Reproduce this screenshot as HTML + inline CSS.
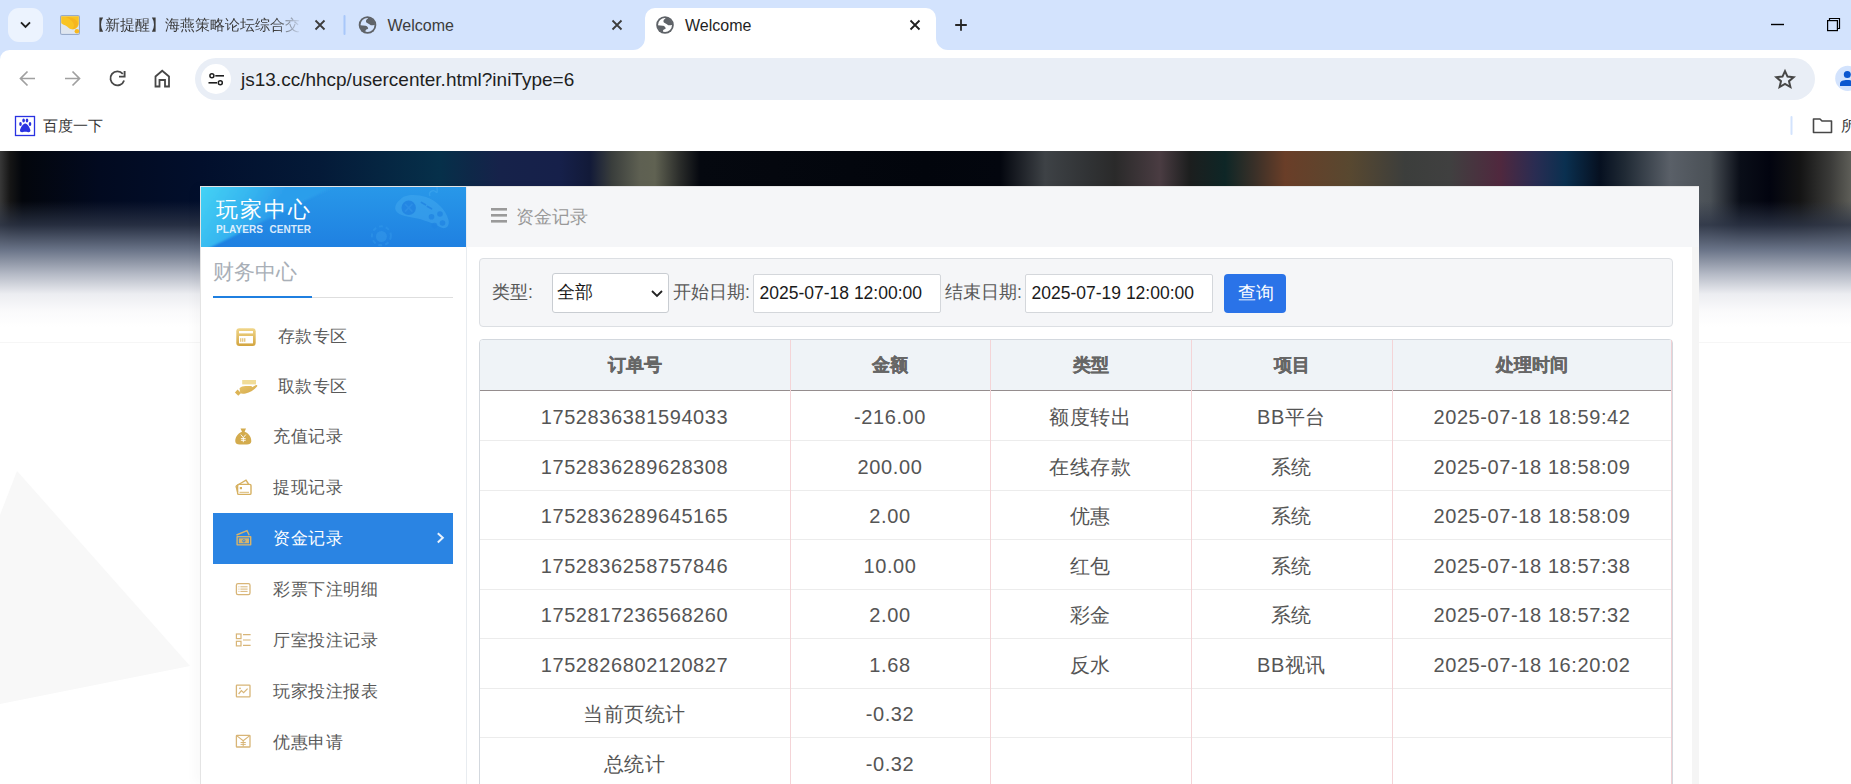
<!DOCTYPE html>
<html><head><meta charset="utf-8">
<style>
*{margin:0;padding:0;box-sizing:border-box}
html,body{width:1851px;height:784px;overflow:hidden;background:#fff;font-family:"Liberation Sans",sans-serif;position:relative}
.a{position:absolute}
/* chrome */
#tabstrip{left:0;top:0;width:1851px;height:62px;background:#d3e3fd}
#toolbar{left:0;top:50px;width:1851px;height:55px;background:#fff;border-top-left-radius:9.5px}
#bookmarks{left:0;top:105px;width:1851px;height:46px;background:#fff}
.tabtitle{font-size:16px;color:#1f1f1f;white-space:nowrap}
/* page */
#page{left:0;top:151px;width:1851px;height:633px;background:#fff;overflow:hidden}
.lbl{font-size:17.5px;color:#595959;line-height:24px;white-space:nowrap}
.th{top:340px;height:50px;line-height:50px;text-align:center;font-size:18px;font-weight:bold;color:#666;-webkit-text-stroke:0.35px #666}
.td{height:49px;line-height:52px;text-align:center;font-size:20px;color:#555;letter-spacing:0.6px;white-space:nowrap}
.mi{font-size:17.2px;letter-spacing:0.5px;line-height:24px;white-space:nowrap}
</style></head><body>
<div id="tabstrip" class="a"></div>
<div id="toolbar" class="a"></div>
<div id="bookmarks" class="a"></div>
<svg class="a" style="left:0;top:0" width="1851" height="151" viewBox="0 0 1851 151">
  <defs><clipPath id="gclip"><circle r="7.6"/></clipPath></defs>
  <!-- tab search button -->
  <rect x="8" y="8" width="35" height="34" rx="11" fill="#ecf3fe"/>
  <path d="M21 22.3 L25.5 26.8 L30 22.3" fill="none" stroke="#1f1f1f" stroke-width="1.9"/>
  <!-- tab1 favicon -->
  <rect x="60.6" y="15.6" width="18.8" height="18.8" rx="1.5" fill="#edf2f9" stroke="#98abca" stroke-width="1.2"/>
  <rect x="62" y="17" width="16" height="16" fill="#dfe6ef"/>
  <path d="M61.2 16.2 H78.8 V23.5 C78.5 27.5 75.5 29.5 72 29.3 C68.5 29 67.5 26.2 65 25.3 C63 24.6 61.2 23.8 61.2 22.5 Z" fill="#f9c423"/>
  <path d="M66 17 C72 17 77 19 78 24 C77 28 74 29.3 72 29.2 C75 27 76 22 66 17Z" fill="#f3ac1d" opacity="0.6"/>
  <circle cx="76.9" cy="31.3" r="2.3" fill="#f7b81e"/>
<!-- tab1 close -->
  <path d="M315.5 20.5 L324.5 29.5 M324.5 20.5 L315.5 29.5" stroke="#3c3c3c" stroke-width="1.8"/>
  <!-- separator -->
  <rect x="343.5" y="15" width="2" height="20" rx="1" fill="#a8c7fa"/>
  <!-- tab2 globe -->
  <g transform="translate(367.5,25)"><circle r="8.8" fill="#5f6368"/><circle r="7" fill="#d3e3fd"/><g clip-path="url(#gclip)"><path d="M1.3,-7.5 L-1.3,-5 C-1.8,-3.5 -1.5,-2.3 -0.3,-2 C1,-1.5 2,-0.5 3.3,0.3 L5.6,0.3 L7.5,-0.3 L7.5,-7.5 Z M-7.5,0.3 L-2,0.7 C-0.5,1 0.5,2 0.7,3.3 C0.5,4 -0.2,4.2 -0.7,4.3 C-1.8,4.8 -2.2,5.6 -2,7 L-2,7.5 L-7.5,7.5 Z" fill="#5f6368"/></g></g>
  <path d="M612.5 20.5 L621.5 29.5 M621.5 20.5 L612.5 29.5" stroke="#3c3c3c" stroke-width="1.8"/>
  <!-- active tab -->
  <path d="M633 50 A12 12 0 0 0 645 38 V18 A10 10 0 0 1 655 8 H926 A10 10 0 0 1 936 18 V38 A12 12 0 0 0 948 50 Z" fill="#fff"/>
  <g transform="translate(665,25)"><circle r="8.8" fill="#5f6368"/><circle r="7" fill="#fff"/><g clip-path="url(#gclip)"><path d="M1.3,-7.5 L-1.3,-5 C-1.8,-3.5 -1.5,-2.3 -0.3,-2 C1,-1.5 2,-0.5 3.3,0.3 L5.6,0.3 L7.5,-0.3 L7.5,-7.5 Z M-7.5,0.3 L-2,0.7 C-0.5,1 0.5,2 0.7,3.3 C0.5,4 -0.2,4.2 -0.7,4.3 C-1.8,4.8 -2.2,5.6 -2,7 L-2,7.5 L-7.5,7.5 Z" fill="#5f6368"/></g></g>
  <path d="M910.5 20.5 L919.5 29.5 M919.5 20.5 L910.5 29.5" stroke="#1f1f1f" stroke-width="1.8"/>
  <!-- plus -->
  <path d="M961 19.2 V30.8 M955.2 25 H966.8" stroke="#262626" stroke-width="1.8"/>
  <!-- window controls -->
  <rect x="1771" y="23.8" width="13" height="1.4" fill="#000"/>
  <path d="M1829.5 20.5 V18.5 H1839.5 V28.5 H1837.5" fill="none" stroke="#000" stroke-width="1.2"/>
  <rect x="1827.6" y="20.6" width="9.8" height="10" fill="none" stroke="#000" stroke-width="1.2"/>
  <!-- toolbar icons -->
  <path d="M35 78.5 H21 M27.5 71.5 L20.5 78.5 L27.5 85.5" fill="none" stroke="#a0a0a0" stroke-width="1.7"/>
  <path d="M65 78.5 H79 M72.5 71.5 L79.5 78.5 L72.5 85.5" fill="none" stroke="#a0a0a0" stroke-width="1.7"/>
  <path d="M122.8 73.8 A7 7 0 1 0 124.1 80.5" fill="none" stroke="#474747" stroke-width="1.8"/>
  <path d="M124.6 71 V76.6 H119" fill="none" stroke="#474747" stroke-width="1.9"/>
  <path d="M155.5 86.5 V76.5 L162.2 70.8 L169 76.5 V86.5 H165 V80 H159.5 V86.5 Z" fill="none" stroke="#474747" stroke-width="1.8" stroke-linejoin="miter"/>
  <!-- omnibox -->
  <rect x="195" y="58" width="1620" height="42" rx="21" fill="#e9eef6"/>
  <circle cx="216" cy="79" r="15" fill="#fff"/>
  <circle cx="211.9" cy="75.8" r="2" fill="none" stroke="#1f1f1f" stroke-width="1.5"/>
  <path d="M215.3 75.8 H224" stroke="#1f1f1f" stroke-width="1.6"/>
  <path d="M208.5 82.8 H217" stroke="#1f1f1f" stroke-width="1.6"/>
  <circle cx="220.3" cy="82.8" r="2" fill="none" stroke="#1f1f1f" stroke-width="1.5"/>
  <!-- star -->
  <path d="M1785 71.2 L1787.5 76.6 L1793.6 77.2 L1789 81.2 L1790.4 87.1 L1785 84 L1779.6 87.1 L1781 81.2 L1776.4 77.2 L1782.5 76.6 Z" fill="none" stroke="#474747" stroke-width="2" stroke-linejoin="miter"/>
  <!-- profile -->
  <circle cx="1847.8" cy="78.4" r="12.6" fill="#d3e3fd"/>
  <circle cx="1847.3" cy="74.6" r="3.5" fill="#0b57d0"/>
  <path d="M1840 86 V83.5 C1840 81 1843.5 80 1847.3 80 C1851 80 1854.6 81 1854.6 83.5 V86 Z" fill="#0b57d0"/>
  <!-- bookmarks -->
  <rect x="15.5" y="116.5" width="19" height="19" fill="#fff" stroke="#2932e1" stroke-width="1.3"/>
  <g fill="#2932e1">
    <ellipse cx="20.5" cy="124" rx="1.3" ry="1.9"/>
    <ellipse cx="23.6" cy="120.5" rx="1.3" ry="1.9"/>
    <ellipse cx="27" cy="120.5" rx="1.3" ry="1.9"/>
    <ellipse cx="30" cy="124" rx="1.3" ry="1.9"/>
    <path d="M25.2 123.5 C23 123.5 20.5 128 20 130 C19.8 132 21.5 132.5 23 132 C24.5 131.6 26 131.6 27.5 132 C29 132.5 30.6 132 30.4 130 C30 128 27.5 123.5 25.2 123.5Z"/>
  </g>
  <rect x="1790.5" y="116" width="2" height="19" rx="1" fill="#d3e3fd"/>
  <path d="M1813.5 119 H1820 L1822 121 H1831.5 V132.5 H1813.5 Z" fill="none" stroke="#474747" stroke-width="1.6" stroke-linejoin="round"/>
</svg>
<div class="a tabtitle" style="left:89.5px;top:16px;font-size:15px;color:#3c3c3c;width:212px;overflow:hidden;-webkit-mask-image:linear-gradient(90deg,#000 185px,transparent 212px)">【新提醒】海燕策略论坛综合交</div>
<div class="a tabtitle" style="left:387.5px;top:17px;color:#3c3c3c">Welcome</div>
<div class="a tabtitle" style="left:685px;top:17px;color:#1f1f1f">Welcome</div>
<div class="a" style="left:241px;top:68.5px;font-size:19px;color:#1f1f1f;white-space:nowrap">js13.cc/hhcp/usercenter.html?iniType=6</div>
<div class="a" style="left:43px;top:117px;font-size:15px;color:#333;white-space:nowrap">百度一下</div>
<div class="a" style="left:1841px;top:117px;font-size:15px;color:#333;white-space:nowrap">所</div>
<div id="page" class="a">
  <div class="a" id="banner" style="left:0;top:0;width:1851px;height:191px;background:linear-gradient(90deg,#383838 0px,#161616 10px,#03060c 22px,#020a20 100px,#020f2c 200px,#041a38 320px,#06304a 440px,#0e2848 470px,#16224a 500px,#16204a 560px,#121a38 590px,#3a3e3c 612px,#5e6052 640px,#606252 655px,#2a2c2a 680px,#05080f 700px,#02050c 925px,#03060e 1000px,#3e4246 1045px,#303234 1090px,#2a2a2a 1115px,#4a3c42 1160px,#1c1e1e 1190px,#0e2626 1225px,#3a3028 1255px,#6a3e28 1285px,#584830 1350px,#3c3e3c 1405px,#404040 1450px,#50283e 1500px,#2a2c52 1535px,#0a3050 1565px,#061020 1600px,#202a35 1625px,#5a6068 1670px,#4a5056 1710px,#0a0e18 1740px,#02040f 1770px,#141414 1800px,#3a3a38 1830px,#5e5e58 1851px)"></div>
  <div class="a" id="bannerfade" style="left:0;top:0;width:1851px;height:191px;background:linear-gradient(180deg,rgba(40,50,72,0) 0px,rgba(40,50,72,0) 50px,rgba(46,54,72,.82) 74px,rgba(106,116,136,1) 99px,rgba(180,185,197,1) 123px,rgba(236,237,241,1) 143px,rgba(250,250,251,1) 160px,#fff 176px,#fff 191px)"></div>
  <div class="a" style="left:0;top:191px;width:1851px;height:1px;background:#f6f6f6"></div>
  <svg class="a" style="left:0;top:0" width="200" height="633"><polygon points="17,320 190,515 0,553 0,364" fill="#f8f8f8"/></svg>
</div>
<!-- container -->
<div class="a" style="left:200px;top:186px;width:1499px;height:598px;background:#f5f5f5;border:1px solid #e4e4e4;border-bottom:none;border-right:none;box-shadow:-6px 0 10px rgba(0,0,0,0.025)"></div>
<!-- sidebar -->
<div class="a" id="side" style="left:201px;top:187px;width:266px;height:597px;background:#fff;border-right:1px solid #e8ecf0"></div>
<svg class="a" id="sidehead" style="left:201px;top:187px" width="265" height="60" viewBox="201 187 265 60">
<defs>
<linearGradient id="hbase" x1="0" y1="0" x2="0" y2="1"><stop offset="0" stop-color="#2898e9"/><stop offset="1" stop-color="#1f80e1"/></linearGradient>
<linearGradient id="hsheen" gradientUnits="userSpaceOnUse" x1="201" y1="187" x2="262" y2="226"><stop offset="0" stop-color="#44d3f5"/><stop offset="0.6" stop-color="#36b6f0"/><stop offset="1" stop-color="#2c9eeb"/></linearGradient><filter id="bl1"><feGaussianBlur stdDeviation="1.2"/></filter><filter id="bl2"><feGaussianBlur stdDeviation="0.5"/></filter>
</defs>
<rect x="201" y="187" width="265" height="60" fill="url(#hbase)"/>
<polygon points="195,181 345,181 201,252 195,252" fill="url(#hsheen)" filter="url(#bl1)"/>
<g opacity="0.4" filter="url(#bl2)">
<path d="M400 200 C404 194 416 194 426 197 C436 200 446 210 448.5 220 C450 227 445 230 440 227 C434 223 428 222 420 219 C410 217 398 216 395.5 210 C394.5 206 397 202 400 200Z" fill="#4cb0f2"/>
<path d="M430 196 C428 192 433 189 436 192 C438 194 437 189 437 186" fill="none" stroke="#4cb0f2" stroke-width="1.3"/>
</g>
<circle cx="408.7" cy="207.8" r="7.2" fill="#2182e2" opacity="0.85"/>
<path d="M405 204 L412.4 211.6 M412.4 204 L405 211.6" stroke="#3597ea" stroke-width="1.6" opacity="0.5"/>
<path d="M421.5 202.5 L425.5 204.8 M427.5 206.5 L431.5 208.8" stroke="#2184e2" stroke-width="1.8" stroke-linecap="round" opacity="0.8"/>
<circle cx="431.5" cy="216.8" r="2.8" fill="#2184e2" opacity="0.8"/>
<circle cx="440" cy="214" r="2.8" fill="#2184e2" opacity="0.8"/>
<circle cx="434.5" cy="225.5" r="2.8" fill="#2184e2" opacity="0.8"/>
<circle cx="442.5" cy="223" r="2.8" fill="#2184e2" opacity="0.8"/>
<circle cx="381.4" cy="235.8" r="9.5" fill="none" stroke="#3aa0ee" stroke-width="2" stroke-dasharray="4 3" opacity="0.35"/>
<circle cx="381.4" cy="236.5" r="5.5" fill="#3a9eec" opacity="0.45"/>
</svg>
<div class="a" style="left:215.5px;top:197px;font-size:22px;letter-spacing:2.3px;color:#fff;white-space:nowrap;line-height:26px">玩家中心</div>
<div class="a" style="left:216px;top:223.5px;font-size:10px;font-weight:bold;color:rgba(240,248,255,0.9);white-space:nowrap;letter-spacing:0.1px;word-spacing:3.5px;line-height:12px">PLAYERS CENTER</div>
<!-- main header -->
<div class="a" style="left:467px;top:187px;width:1232px;height:60px;background:#f5f6f8"></div>
<div class="a" style="left:467px;top:247px;width:1225px;height:537px;background:#fff"></div>
<svg class="a" style="left:491px;top:207px" width="17" height="17"><rect x="0" y="1" width="16" height="2.6" fill="#9a9a9a"/><rect x="0" y="7" width="16" height="2.6" fill="#9a9a9a"/><rect x="0" y="13" width="16" height="2.6" fill="#9a9a9a"/></svg>
<div class="a" style="left:516px;top:205px;font-size:17.5px;color:#999;white-space:nowrap;line-height:24px">资金记录</div>
<!-- sidebar title -->
<div class="a" style="left:213px;top:260px;font-size:21px;color:#a9afb7;white-space:nowrap;line-height:24px">财务中心</div>
<div class="a" style="left:213px;top:297px;width:240px;height:1px;background:#dedede"></div>
<div class="a" style="left:213px;top:295.5px;width:99px;height:2.5px;background:#1f7fe0"></div>
<!-- menu -->
<div class="a" style="left:213px;top:513px;width:240px;height:51px;background:#2a84e3"></div>
<!-- filter -->
<div class="a" style="left:479px;top:258px;width:1194px;height:69px;background:#f5f6f8;border:1px solid #dcdfe3;border-radius:4px"></div>
<div class="a lbl" style="left:492px;top:280px">类型:</div>
<div class="a" style="left:552px;top:273px;width:117px;height:40px;background:#fff;border:1px solid #c9cdd2;border-radius:3px"></div>
<div class="a" style="left:557px;top:280px;font-size:17.5px;color:#1a1a1a;line-height:24px">全部</div>
<svg class="a" style="left:650px;top:289px" width="14" height="10"><path d="M2 2 L7 7 L12 2" fill="none" stroke="#222" stroke-width="1.8"/></svg>
<div class="a lbl" style="left:673px;top:280px">开始日期:</div>
<div class="a" style="left:753px;top:274px;width:188px;height:39px;background:#fff;border:1px solid #d4d7db;border-radius:2px"></div>
<div class="a" style="left:759.5px;top:283px;font-size:17.5px;color:#1a1a1a;line-height:20px;white-space:nowrap">2025-07-18 12:00:00</div>
<div class="a lbl" style="left:945px;top:280px">结束日期:</div>
<div class="a" style="left:1025px;top:274px;width:188px;height:39px;background:#fff;border:1px solid #d4d7db;border-radius:2px"></div>
<div class="a" style="left:1031.5px;top:283px;font-size:17.5px;color:#1a1a1a;line-height:20px;white-space:nowrap">2025-07-19 12:00:00</div>
<div class="a" style="left:1224px;top:274px;width:62px;height:39px;background:#2a73e8;border-radius:4px"></div>
<div class="a" style="left:1238px;top:281px;font-size:17.5px;color:#fff;line-height:24px">查询</div>

<!-- table -->
<div class="a" style="left:479px;top:339px;width:1194px;height:460px;background:#fff;border:1px solid #d3d8de;border-radius:4px 4px 0 0"></div>
<div class="a" style="left:480px;top:340px;width:1192px;height:50px;background:#eff3f7;border-radius:3px 3px 0 0"></div>
<div class="a" style="left:480px;top:390px;width:1192px;height:1px;background:#958d8e"></div>
<div class="a" style="left:480px;top:440.3px;width:1192px;height:1px;background:#ececec"></div>
<div class="a" style="left:480px;top:489.8px;width:1192px;height:1px;background:#ececec"></div>
<div class="a" style="left:480px;top:539.3px;width:1192px;height:1px;background:#ececec"></div>
<div class="a" style="left:480px;top:588.8px;width:1192px;height:1px;background:#ececec"></div>
<div class="a" style="left:480px;top:638.3px;width:1192px;height:1px;background:#ececec"></div>
<div class="a" style="left:480px;top:687.8px;width:1192px;height:1px;background:#ececec"></div>
<div class="a" style="left:480px;top:737.3px;width:1192px;height:1px;background:#ececec"></div>
<div class="a" style="left:480px;top:786.8px;width:1192px;height:1px;background:#ececec"></div>
<div class="a" style="left:790px;top:340px;width:1px;height:444px;background:#f4d4d7"></div>
<div class="a" style="left:990px;top:340px;width:1px;height:444px;background:#f4d4d7"></div>
<div class="a" style="left:1191px;top:340px;width:1px;height:444px;background:#f4d4d7"></div>
<div class="a" style="left:1392px;top:340px;width:1px;height:444px;background:#f4d4d7"></div>
<div class="a" style="left:1671px;top:340px;width:1px;height:444px;background:#f0d0d4"></div>
<div class="a th" style="left:479px;width:311px">订单号</div>
<div class="a th" style="left:790px;width:200px">金额</div>
<div class="a th" style="left:990px;width:201px">类型</div>
<div class="a th" style="left:1191px;width:201px">项目</div>
<div class="a th" style="left:1392px;width:280px">处理时间</div>
<div class="a td" style="left:479px;top:391.0px;width:311px">1752836381594033</div>
<div class="a td" style="left:790px;top:391.0px;width:200px">-216.00</div>
<div class="a td" style="left:990px;top:391.0px;width:201px">额度转出</div>
<div class="a td" style="left:1191px;top:391.0px;width:201px">BB平台</div>
<div class="a td" style="left:1392px;top:391.0px;width:280px">2025-07-18 18:59:42</div>
<div class="a td" style="left:479px;top:440.5px;width:311px">1752836289628308</div>
<div class="a td" style="left:790px;top:440.5px;width:200px">200.00</div>
<div class="a td" style="left:990px;top:440.5px;width:201px">在线存款</div>
<div class="a td" style="left:1191px;top:440.5px;width:201px">系统</div>
<div class="a td" style="left:1392px;top:440.5px;width:280px">2025-07-18 18:58:09</div>
<div class="a td" style="left:479px;top:490.0px;width:311px">1752836289645165</div>
<div class="a td" style="left:790px;top:490.0px;width:200px">2.00</div>
<div class="a td" style="left:990px;top:490.0px;width:201px">优惠</div>
<div class="a td" style="left:1191px;top:490.0px;width:201px">系统</div>
<div class="a td" style="left:1392px;top:490.0px;width:280px">2025-07-18 18:58:09</div>
<div class="a td" style="left:479px;top:539.5px;width:311px">1752836258757846</div>
<div class="a td" style="left:790px;top:539.5px;width:200px">10.00</div>
<div class="a td" style="left:990px;top:539.5px;width:201px">红包</div>
<div class="a td" style="left:1191px;top:539.5px;width:201px">系统</div>
<div class="a td" style="left:1392px;top:539.5px;width:280px">2025-07-18 18:57:38</div>
<div class="a td" style="left:479px;top:589.0px;width:311px">1752817236568260</div>
<div class="a td" style="left:790px;top:589.0px;width:200px">2.00</div>
<div class="a td" style="left:990px;top:589.0px;width:201px">彩金</div>
<div class="a td" style="left:1191px;top:589.0px;width:201px">系统</div>
<div class="a td" style="left:1392px;top:589.0px;width:280px">2025-07-18 18:57:32</div>
<div class="a td" style="left:479px;top:638.5px;width:311px">1752826802120827</div>
<div class="a td" style="left:790px;top:638.5px;width:200px">1.68</div>
<div class="a td" style="left:990px;top:638.5px;width:201px">反水</div>
<div class="a td" style="left:1191px;top:638.5px;width:201px">BB视讯</div>
<div class="a td" style="left:1392px;top:638.5px;width:280px">2025-07-18 16:20:02</div>
<div class="a td" style="left:479px;top:688.0px;width:311px">当前页统计</div>
<div class="a td" style="left:790px;top:688.0px;width:200px">-0.32</div>
<div class="a td" style="left:479px;top:737.5px;width:311px">总统计</div>
<div class="a td" style="left:790px;top:737.5px;width:200px">-0.32</div>
<div class="a mi" style="left:277.5px;top:323.7px;color:#595959">存款专区</div>
<div class="a mi" style="left:277.5px;top:374.0px;color:#595959">取款专区</div>
<div class="a mi" style="left:273px;top:424.2px;color:#595959">充值记录</div>
<div class="a mi" style="left:273px;top:474.7px;color:#595959">提现记录</div>
<div class="a mi" style="left:273px;top:525.7px;color:#fff">资金记录</div>
<div class="a mi" style="left:273px;top:576.7px;color:#595959">彩票下注明细</div>
<div class="a mi" style="left:273px;top:627.7px;color:#595959">厅室投注记录</div>
<div class="a mi" style="left:273px;top:678.8px;color:#595959">玩家投注报表</div>
<div class="a mi" style="left:273px;top:730.1px;color:#595959">优惠申请</div>
<!-- menu icons -->
<svg class="a" style="left:0;top:0" width="470" height="784" viewBox="0 0 470 784">
<defs>
<linearGradient id="gold1" x1="0" y1="0" x2="0" y2="1"><stop offset="0" stop-color="#f0d68a"/><stop offset="1" stop-color="#d2a43e"/></linearGradient>
<linearGradient id="gold2" x1="0" y1="0" x2="1" y2="1"><stop offset="0" stop-color="#e9c56a"/><stop offset="1" stop-color="#d3a84a"/></linearGradient>
</defs>
<!-- card -->
<rect x="236.3" y="328.3" width="19.4" height="17.7" rx="3" fill="url(#gold1)"/>
<rect x="239" y="331" width="14" height="2.4" fill="#fff"/>
<rect x="239" y="336" width="14" height="7.4" fill="#fff"/>
<rect x="240.3" y="338.2" width="1" height="3.6" fill="#dcb354"/>
<rect x="242.3" y="338.2" width="1" height="3.6" fill="#dcb354"/>
<rect x="244.3" y="338.2" width="1" height="3.6" fill="#dcb354"/>
<!-- hand -->
<rect x="242.2" y="380" width="13.8" height="4.4" fill="#f1dc97"/>
<path d="M239.5 388.2 C241 386.6 243 385.9 245.5 385.9 L250.5 386 C252.3 386.1 252.6 387.6 251 387.9 L247.3 388.3 C249.5 388.6 252 387.6 255.6 385.3 C256.8 384.6 257.9 385.6 257 386.6 C254.5 389.5 250.5 392.5 245.5 393.4 C243.5 393.8 241.5 393.7 240.3 393.3 Z" fill="url(#gold2)"/>
<polygon points="234.9,392.4 237.6,389.6 241,393 238.3,395.8" fill="#dcb456"/>
<!-- money bag -->
<path d="M240.5 428.6 L246 428.6 L244.6 431.8 C249.5 433.5 251.5 438 251.3 441.5 C251.1 443.6 249.5 444.4 247 444.4 L239.5 444.4 C237 444.4 235.4 443.6 235.3 441.5 C235.1 438 237.2 433.5 242 431.8 Z" fill="#d3ab4d"/>
<path d="M240.8 434.6 L243.3 437.6 L245.8 434.6 M243.3 437.6 V442.2 M240.9 438.6 H245.7 M240.9 440.3 H245.7" fill="none" stroke="#fff" stroke-width="0.9"/>
<!-- wallet -->
<path d="M236 486 L246 480.2 L248.5 484" fill="none" stroke="#d6b060" stroke-width="1.4"/>
<rect x="237.6" y="484.4" width="13.4" height="10" rx="1.2" fill="none" stroke="#d6b060" stroke-width="1.4"/>
<path d="M236 486 L237.6 492" fill="none" stroke="#d6b060" stroke-width="1.4"/>
<rect x="239.8" y="487" width="2.2" height="2.2" fill="#d6b060"/>
<path d="M239.5 492.3 H249" stroke="#d6b060" stroke-width="0.9"/>
<!-- cash (active) -->
<path d="M236.5 535 L247 530.6 L249.2 535.2" fill="none" stroke="#d8b46a" stroke-width="1.4"/>
<rect x="236.4" y="536" width="15" height="9.6" rx="0.8" fill="#d8b46a"/>
<rect x="237.8" y="537.4" width="12.2" height="6.8" fill="#2a84e3"/>
<rect x="238.8" y="538.3" width="10.2" height="5" fill="#d8b46a"/>
<circle cx="243.9" cy="540.8" r="1.6" fill="#2a84e3"/>
<circle cx="243.9" cy="540.8" r="0.8" fill="#d8b46a"/>
<!-- list card -->
<rect x="236.4" y="583.6" width="13.6" height="11" rx="1.6" fill="none" stroke="#d8b577" stroke-width="1.3"/>
<path d="M240.4 586.8 H247.6 M240.4 589.1 H247.6 M240.4 591.4 H247.6" stroke="#d8b577" stroke-width="1"/>
<path d="M238.5 586.8 h0.9 M238.5 589.1 h0.9 M238.5 591.4 h0.9" stroke="#d8b577" stroke-width="1"/>
<!-- list -->
<rect x="236.4" y="634" width="4.6" height="4.6" fill="none" stroke="#d8b577" stroke-width="1.2"/>
<rect x="236.4" y="641.3" width="4.6" height="4.6" fill="none" stroke="#d8b577" stroke-width="1.2"/>
<path d="M243 634.6 H250.6 M243 640 H250.6 M243 645.4 H250.6" stroke="#d8b577" stroke-width="1.2"/>
<!-- chart -->
<rect x="236.4" y="685.1" width="13.6" height="11.8" rx="0.6" fill="none" stroke="#d8b577" stroke-width="1.3"/>
<path d="M238.6 694 L241.4 690.6 L243.6 692.6 L247.6 688.6" fill="none" stroke="#d8b577" stroke-width="1.2"/>
<circle cx="240" cy="688.3" r="0.9" fill="#d8b577"/>
<!-- envelope yen -->
<rect x="236.4" y="735.4" width="13.6" height="11.6" rx="0.6" fill="none" stroke="#d8b577" stroke-width="1.3"/>
<path d="M236.6 735.6 L243.2 740.8 L249.8 735.6" fill="none" stroke="#d8b577" stroke-width="1.1"/>
<path d="M243.2 740.8 V746.5 M240.6 742.5 H245.8 M240.6 744.4 H245.8" fill="none" stroke="#d8b577" stroke-width="1"/>
</svg>
<svg class="a" style="left:435px;top:532px" width="12" height="12"><path d="M2.8 1.2 L7.8 5.8 L2.8 10.4" fill="none" stroke="#eaf2fc" stroke-width="2"/></svg>
</body></html>
